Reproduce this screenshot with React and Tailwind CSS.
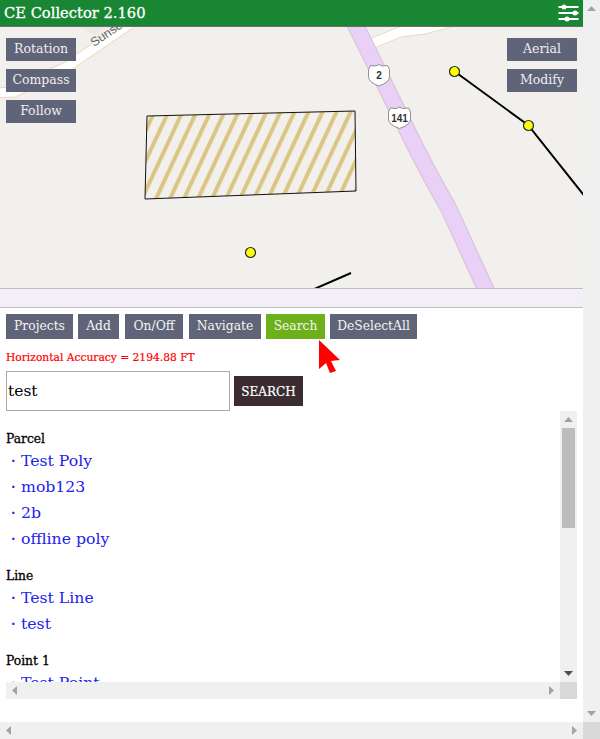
import React from "react";

const font = { fontFamily: '"DejaVu Serif", serif' };

function Arrow({ dir, color = "#a3a3a3" }) {
  const pts = {
    up: "0,5 4.5,0 9,5",
    down: "0,0 9,0 4.5,5",
    left: "5,0 5,9 0,4.5",
    right: "0,0 0,9 5,4.5",
  }[dir];
  const v = dir === "up" || dir === "down";
  return (
    <svg width={v ? 9 : 5} height={v ? 5 : 9} viewBox={v ? "0 0 9 5" : "0 0 5 9"} className="block">
      <polygon points={pts} fill={color} />
    </svg>
  );
}

function Shield({ x, y, label }) {
  const w = label.length > 1 ? 11 : 10.5;
  return (
    <g transform={`translate(${x} ${y})`}>
      <path
        d={`M${-w + 2} -10 L-3 -9.5 L0 -11 L3 -9.5 L${w - 2} -10 L${w} -6 L${w} 1 Q${w} 7 0 10.5 Q${-w} 7 ${-w} 1 L${-w} -6 Z`}
        fill="#fff"
        stroke="#8f8f8f"
        strokeWidth="1"
      />
      <text x="0" y="3.5" textAnchor="middle" fontSize="10" fontWeight="700" fill="#333" style={{ fontFamily: '"Liberation Sans", sans-serif' }}>
        {label}
      </text>
    </g>
  );
}

function MapDrawing() {
  return (
    <svg width="583" height="261" viewBox="0 27 583 261" className="block">
      <defs>
        <pattern id="hatch" width="12.7" height="30" patternUnits="userSpaceOnUse" patternTransform="translate(147 116) rotate(25)">
          <rect x="3" y="0" width="4" height="30" fill="#dcc485" />
        </pattern>
      </defs>
      <rect x="0" y="27" width="583" height="261" fill="#f1f0ec" />
      <polygon points="78,27 108,27 95,35" fill="#ebe9e4" />
      <path d="M-5 93 L14 92 L68 66 L130 24" fill="none" stroke="#ead9c4" strokeWidth="11" />
      <path d="M-5 93 L14 92 L68 66 L130 24" fill="none" stroke="#ffffff" strokeWidth="9" />
      <text x="0" y="0" fontSize="12.5" fill="#666" transform="translate(94 47) rotate(-34)" style={{ fontFamily: '"Liberation Sans", sans-serif' }}>
        Sunset
      </text>
      <path d="M373 43 L400 32 L424 29 L450 22" fill="none" stroke="#ead9c4" strokeWidth="11" />
      <path d="M373 43 L400 32 L424 29 L450 22" fill="none" stroke="#ffffff" strokeWidth="9" />
      <path d="M354 22 L417 150 Q435 185 448 207 L487 292" fill="none" stroke="#d9bfd8" strokeWidth="17" />
      <path d="M354 22 L417 150 Q435 185 448 207 L487 292" fill="none" stroke="#e8d0f7" strokeWidth="15" />
      <polygon points="147,116 355,111 356,191 145,199" fill="#f1f0ec" />
      <polygon points="147,116 355,111 356,191 145,199" fill="url(#hatch)" stroke="#111" strokeWidth="1" />
      <polyline points="454,71 528,125 590,203" fill="none" stroke="#000" strokeWidth="2" />
      <line x1="351" y1="273" x2="312" y2="290" stroke="#000" strokeWidth="2" />
      <circle cx="454.5" cy="71.5" r="5" fill="#ffff00" stroke="#2b2b2b" strokeWidth="1.2" />
      <circle cx="528.5" cy="125.5" r="5" fill="#ffff00" stroke="#2b2b2b" strokeWidth="1.2" />
      <circle cx="250.5" cy="252.5" r="5" fill="#ffff00" stroke="#2b2b2b" strokeWidth="1.2" />
      <Shield x={379} y={75.5} label="2" />
      <Shield x={399.5} y={118} label="141" />
    </svg>
  );
}

function MapButton({ children }) {
  return (
    <div className="w-[70px] h-[23px] bg-[#606478] text-[#eeeeee] text-[12.5px] flex items-center justify-center">
      {children}
    </div>
  );
}

function ToolButton({ children, className }) {
  return (
    <div className={"h-[25px] text-[#f4f4f4] text-[12.3px] flex items-center justify-center " + className}>
      {children}
    </div>
  );
}

function Group({ label, items }) {
  return (
    <div className="mb-[12px]">
      <div className="h-[21px] pt-[3px] flex items-center text-[12.3px] text-black [-webkit-text-stroke:0.3px_#000]">{label}</div>
      {items.map((t) => (
        <div key={t} className="h-[26px] flex items-center text-[#2222ee] text-[15.7px]">
          <span className="w-[15px] pl-[5px] text-[13px] font-bold">·</span>
          <span>{t}</span>
        </div>
      ))}
    </div>
  );
}

export default function App() {
  return (
    <div className="w-[600px] h-[739px] bg-white flex flex-col overflow-hidden" style={font}>
      <div className="flex h-[722px]">
        <div className="w-[583px] flex flex-col">
          <div className="h-[27px] bg-[#188632] border-b border-[#6d6d6d] flex items-center justify-between pl-[4px] pr-[4px]">
            <span className="text-white text-[14.7px] [-webkit-text-stroke:0.3px_#fff]">CE Collector 2.160</span>
            <svg width="21" height="20" viewBox="0 0 21 20" className="block">
              <g stroke="#fff" strokeWidth="2">
                <line x1="0.5" y1="4" x2="20.5" y2="4" />
                <line x1="0.5" y1="10" x2="20.5" y2="10" />
                <line x1="0.5" y1="16" x2="20.5" y2="16" />
              </g>
              <g fill="#fff">
                <circle cx="6" cy="4" r="2.5" />
                <circle cx="17" cy="10" r="2.5" />
                <circle cx="9" cy="16" r="2.5" />
              </g>
            </svg>
          </div>

          <div className="relative h-[261px]">
            <MapDrawing />
            <div className="absolute left-[6px] top-[11px] flex flex-col gap-[8px]">
              <MapButton>Rotation</MapButton>
              <MapButton>Compass</MapButton>
              <MapButton>Follow</MapButton>
            </div>
            <div className="absolute right-[6px] top-[11px] flex flex-col gap-[8px]">
              <MapButton>Aerial</MapButton>
              <MapButton>Modify</MapButton>
            </div>
          </div>

          <div className="h-[20px] bg-[#f3eff6] border-y border-[#bfbcc1]" />

          <div className="relative flex gap-[5px] pl-[6px] pt-[6px]">
            <ToolButton className="w-[67px] bg-[#606478]">Projects</ToolButton>
            <ToolButton className="w-[41px] bg-[#606478]">Add</ToolButton>
            <ToolButton className="w-[58px] ml-[1px] bg-[#606478]">On/Off</ToolButton>
            <ToolButton className="w-[72px] ml-[1px] bg-[#606478]">Navigate</ToolButton>
            <ToolButton className="w-[59px] bg-[#6cb01a]">Search</ToolButton>
            <ToolButton className="w-[87px] bg-[#606478]">DeSelectAll</ToolButton>
            <svg width="22" height="33" viewBox="0 0 22 33" className="absolute left-[319px] top-[32px]">
              <polygon points="0,0 21,20 12,21 17,31 11,33 7,23 0,29" fill="#ff0000" />
            </svg>
          </div>

          <div className="pl-[6px] mt-[12px] h-[14px] flex items-center text-[#ff0000] text-[10.7px] [-webkit-text-stroke:0.2px_#ff0000]">
            Horizontal Accuracy = 2194.88 FT
          </div>

          <div className="flex items-center gap-[4px] pl-[6px] mt-[6px]">
            <div className="w-[224px] h-[40px] pt-[2px] border border-[#a9a9a9] flex items-center pl-[1px] text-[15.5px] text-black">test</div>
            <div className="w-[69px] h-[30px] pt-[1px] bg-[#3a2c30] text-white text-[12px] [-webkit-text-stroke:0.2px_#fff] flex items-center justify-center">SEARCH</div>
          </div>

          <div className="ml-[6px] w-[571px] h-[288px] flex flex-col">
            <div className="flex h-[271px]">
              <div className="flex-1 overflow-hidden pt-[16px]">
                <Group label="Parcel" items={["Test Poly", "mob123", "2b", "offline poly"]} />
                <Group label="Line" items={["Test Line", "test"]} />
                <Group label="Point 1" items={["Test Point"]} />
              </div>
              <div className="w-[17px] bg-[#f0f0f0] flex flex-col items-center">
                <div className="h-[17px] flex items-center justify-center"><Arrow dir="up" /></div>
                <div className="w-[13px] h-[100px] bg-[#bdbdbd]" />
                <div className="flex-1" />
                <div className="h-[17px] flex items-center justify-center"><Arrow dir="down" color="#505050" /></div>
              </div>
            </div>
            <div className="flex h-[17px]">
              <div className="flex-1 bg-[#f0f0f0] flex items-center justify-between px-[6px]">
                <Arrow dir="left" />
                <Arrow dir="right" />
              </div>
              <div className="w-[17px] bg-[#d9d9d9]" />
            </div>
          </div>
        </div>

        <div className="w-[17px] bg-[#f0f0f0] flex flex-col items-center justify-between">
          <div className="h-[17px] flex items-center justify-center"><Arrow dir="up" /></div>
          <div className="h-[17px] flex items-center justify-center"><Arrow dir="down" /></div>
        </div>
      </div>

      <div className="flex h-[17px]">
        <div className="w-[583px] bg-[#f0f0f0] flex items-center justify-between px-[6px]">
          <Arrow dir="left" />
          <Arrow dir="right" />
        </div>
        <div className="w-[17px] bg-[#d9d9d9]" />
      </div>
    </div>
  );
}
